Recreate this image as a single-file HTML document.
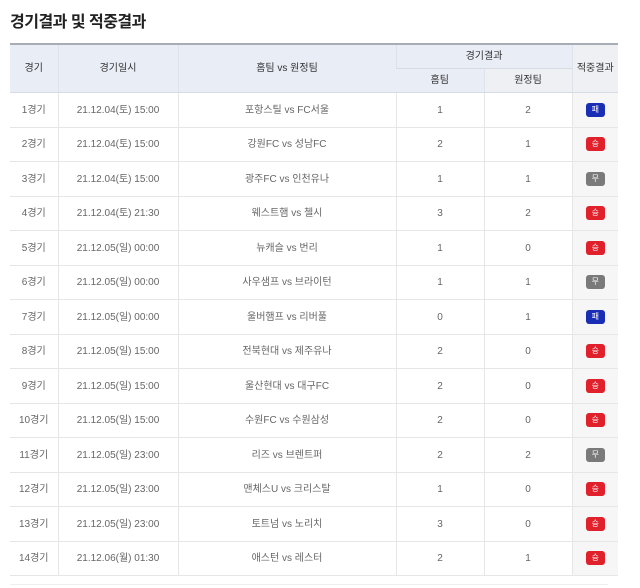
<!DOCTYPE html>
<html><head><meta charset="utf-8"><style>
body{margin:0;background:#fff;width:640px;height:588px;overflow:hidden;font-family:"Liberation Sans","Noto Sans CJK KR",sans-serif;}
h1{position:absolute;left:10px;top:8px;margin:0;font-size:16px;font-weight:bold;color:#222;letter-spacing:-0.5px;}
table{position:absolute;left:10px;top:43px;border-collapse:collapse;width:608px;table-layout:fixed;font-size:10px;color:#666;}
th{background:#e9edf6;color:#333;font-weight:normal;font-size:10px;border-left:1px solid #dde2ec;border-bottom:1px solid #d6dbe4;padding:0;line-height:12px;}
thead tr:first-child th{border-top:2px solid #a7acb5;}
th:first-child,td:first-child{border-left:none;}
td{height:31.5px;text-align:center;vertical-align:middle;line-height:14px;border-left:1px solid #e6e6e6;border-bottom:1px solid #e6e6e6;padding:2px 0 0 0;}
td:last-child{background:#f6f6f6;padding-top:0;height:33.5px;}
th:last-child{background:#eef0f4;}
.b{display:inline-block;width:19px;height:14px;border-radius:3px;color:#fff;font-size:8px;line-height:14px;vertical-align:top;}
.w{background:#e0202a}.l{background:#1a2db5}.d{background:#7a7a7a}
.foot{position:absolute;left:10px;top:584px;width:598px;border-top:1px solid #eee;}
</style></head><body>
<h1>경기결과 및 적중결과</h1>
<table>
<colgroup><col style="width:48px"><col style="width:120px"><col style="width:218px"><col style="width:88px"><col style="width:88px"><col style="width:46px"></colgroup>
<thead>
<tr><th rowspan="2">경기</th><th rowspan="2">경기일시</th><th rowspan="2">홈팀 vs 원정팀</th><th colspan="2" style="height:23px">경기결과</th><th rowspan="2">적중결과</th></tr>
<tr><th style="height:23px;border-left:none">홈팀</th><th>원정팀</th></tr>
</thead>
<tbody>
<tr><td>1경기</td><td>21.12.04(토) 15:00</td><td>포항스틸 vs FC서울</td><td>1</td><td>2</td><td><span class="b l">패</span></td></tr>
<tr><td>2경기</td><td>21.12.04(토) 15:00</td><td>강원FC vs 성남FC</td><td>2</td><td>1</td><td><span class="b w">승</span></td></tr>
<tr><td>3경기</td><td>21.12.04(토) 15:00</td><td>광주FC vs 인천유나</td><td>1</td><td>1</td><td><span class="b d">무</span></td></tr>
<tr><td>4경기</td><td>21.12.04(토) 21:30</td><td>웨스트햄 vs 첼시</td><td>3</td><td>2</td><td><span class="b w">승</span></td></tr>
<tr><td>5경기</td><td>21.12.05(일) 00:00</td><td>뉴캐슬 vs 번리</td><td>1</td><td>0</td><td><span class="b w">승</span></td></tr>
<tr><td>6경기</td><td>21.12.05(일) 00:00</td><td>사우샘프 vs 브라이턴</td><td>1</td><td>1</td><td><span class="b d">무</span></td></tr>
<tr><td>7경기</td><td>21.12.05(일) 00:00</td><td>울버햄프 vs 리버풀</td><td>0</td><td>1</td><td><span class="b l">패</span></td></tr>
<tr><td>8경기</td><td>21.12.05(일) 15:00</td><td>전북현대 vs 제주유나</td><td>2</td><td>0</td><td><span class="b w">승</span></td></tr>
<tr><td>9경기</td><td>21.12.05(일) 15:00</td><td>울산현대 vs 대구FC</td><td>2</td><td>0</td><td><span class="b w">승</span></td></tr>
<tr><td>10경기</td><td>21.12.05(일) 15:00</td><td>수원FC vs 수원삼성</td><td>2</td><td>0</td><td><span class="b w">승</span></td></tr>
<tr><td>11경기</td><td>21.12.05(일) 23:00</td><td>리즈 vs 브렌트퍼</td><td>2</td><td>2</td><td><span class="b d">무</span></td></tr>
<tr><td>12경기</td><td>21.12.05(일) 23:00</td><td>맨체스U vs 크리스탈</td><td>1</td><td>0</td><td><span class="b w">승</span></td></tr>
<tr><td>13경기</td><td>21.12.05(일) 23:00</td><td>토트넘 vs 노리치</td><td>3</td><td>0</td><td><span class="b w">승</span></td></tr>
<tr><td>14경기</td><td>21.12.06(월) 01:30</td><td>애스턴 vs 레스터</td><td>2</td><td>1</td><td><span class="b w">승</span></td></tr>
</tbody>
</table>
<div class="foot"></div>
</body></html>
